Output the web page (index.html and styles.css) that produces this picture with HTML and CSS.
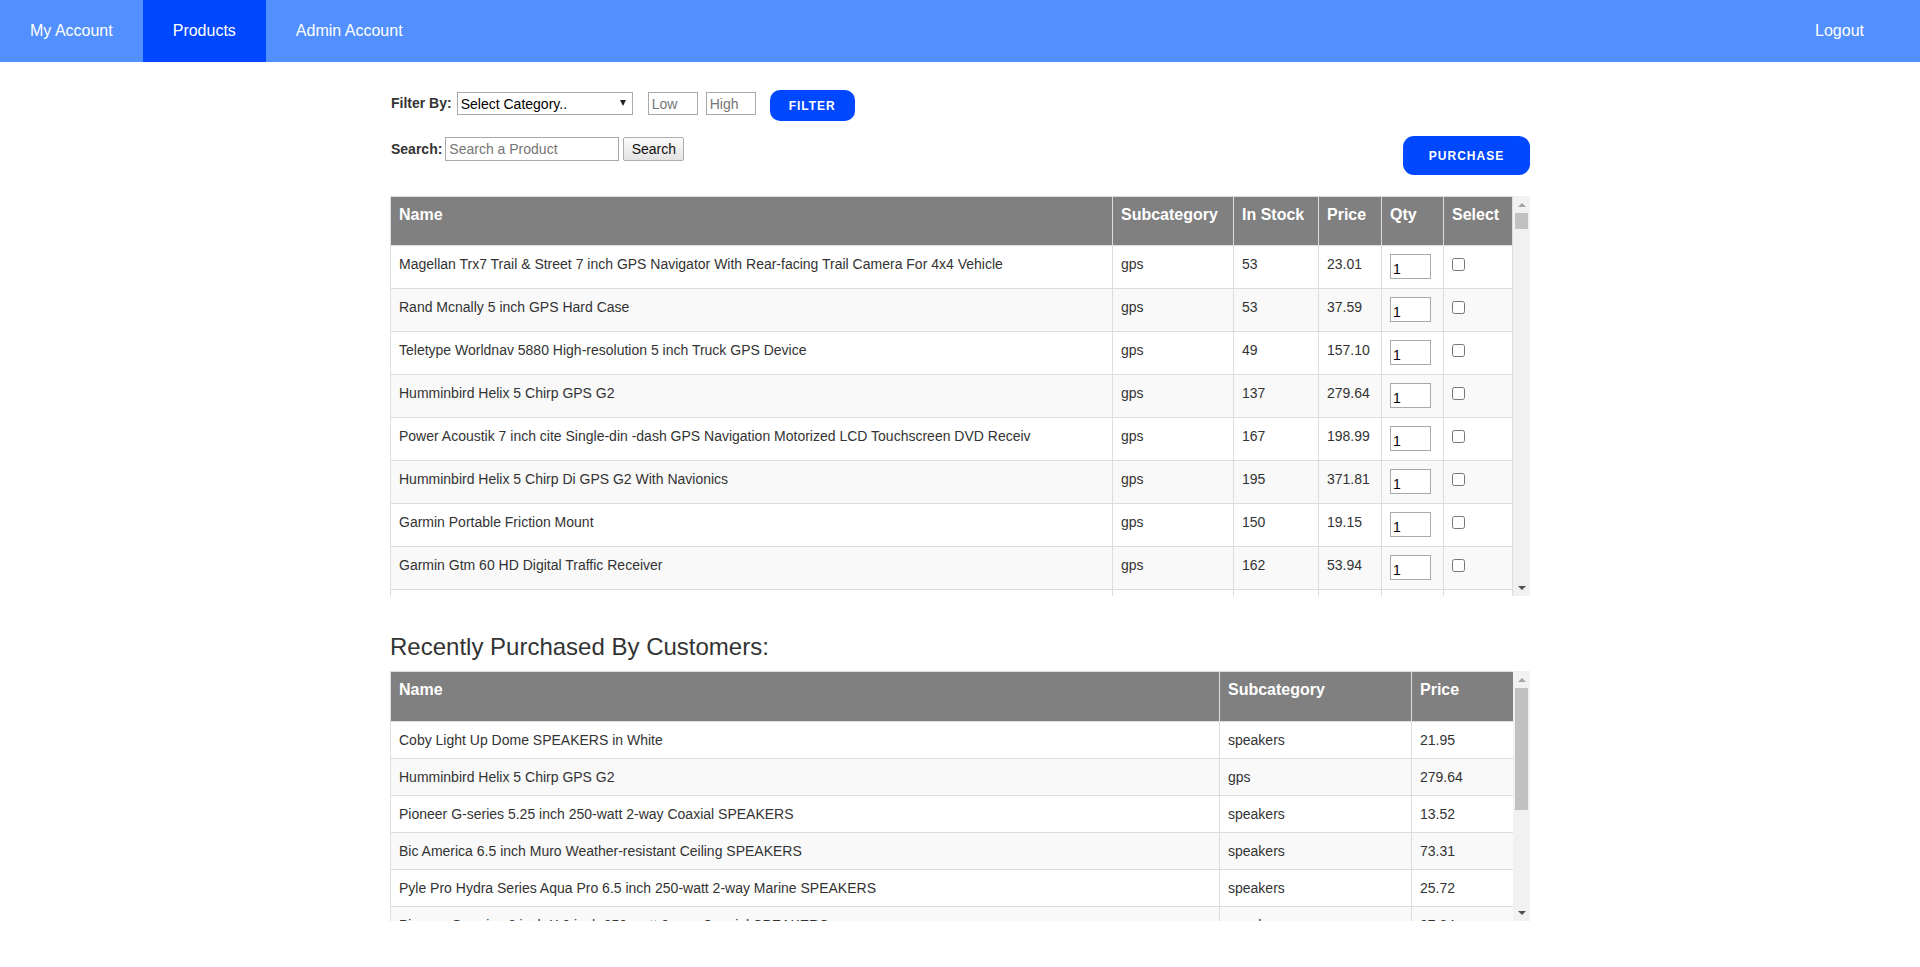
FILE: index.html
```html
<!DOCTYPE html>
<html lang="en">
<head>
<meta charset="utf-8">
<title>Products</title>
<link rel="stylesheet" href="styles.css">
</head>
<body>
<nav class="topnav">
  <a class="nav-link" href="#">My Account</a>
  <a class="nav-link active" href="#">Products</a>
  <a class="nav-link" href="#">Admin Account</a>
  <a class="nav-link logout" href="#">Logout</a>
</nav>

<main class="container">
  <div class="filter-row">
    <label class="lbl">Filter By:</label>
    <span class="select-wrap"><select class="sel"><option>Select Category..</option></select></span>
    <input class="price-in low" type="text" placeholder="Low">
    <input class="price-in high" type="text" placeholder="High">
    <button class="btn-blue filter">FILTER</button>
  </div>

  <div class="search-row">
    <div class="search-group">
      <label class="lbl">Search:</label>
      <input class="search-in" type="text" placeholder="Search a Product">
      <button class="btn-search">Search</button>
    </div>
    <button class="btn-blue purchase">PURCHASE</button>
  </div>

  <div class="scroll-box products-box">
    <div class="table-view">
      <table class="grid products">
        <colgroup>
          <col class="c-name"><col class="c-sub"><col class="c-stock"><col class="c-price"><col class="c-qty"><col class="c-sel">
        </colgroup>
        <thead>
          <tr><th>Name</th><th>Subcategory</th><th>In Stock</th><th>Price</th><th>Qty</th><th>Select</th></tr>
        </thead>
        <tbody>
          <tr><td>Magellan Trx7 Trail &amp; Street 7 inch GPS Navigator With Rear-facing Trail Camera For 4x4 Vehicle</td><td>gps</td><td>53</td><td>23.01</td><td><input class="qty" type="text" value="1"></td><td><input class="chk" type="checkbox"></td></tr>
          <tr><td>Rand Mcnally 5 inch GPS Hard Case</td><td>gps</td><td>53</td><td>37.59</td><td><input class="qty" type="text" value="1"></td><td><input class="chk" type="checkbox"></td></tr>
          <tr><td>Teletype Worldnav 5880 High-resolution 5 inch Truck GPS Device</td><td>gps</td><td>49</td><td>157.10</td><td><input class="qty" type="text" value="1"></td><td><input class="chk" type="checkbox"></td></tr>
          <tr><td>Humminbird Helix 5 Chirp GPS G2</td><td>gps</td><td>137</td><td>279.64</td><td><input class="qty" type="text" value="1"></td><td><input class="chk" type="checkbox"></td></tr>
          <tr><td>Power Acoustik 7 inch cite Single-din -dash GPS Navigation Motorized LCD Touchscreen DVD Receiv</td><td>gps</td><td>167</td><td>198.99</td><td><input class="qty" type="text" value="1"></td><td><input class="chk" type="checkbox"></td></tr>
          <tr><td>Humminbird Helix 5 Chirp Di GPS G2 With Navionics</td><td>gps</td><td>195</td><td>371.81</td><td><input class="qty" type="text" value="1"></td><td><input class="chk" type="checkbox"></td></tr>
          <tr><td>Garmin Portable Friction Mount</td><td>gps</td><td>150</td><td>19.15</td><td><input class="qty" type="text" value="1"></td><td><input class="chk" type="checkbox"></td></tr>
          <tr><td>Garmin Gtm 60 HD Digital Traffic Receiver</td><td>gps</td><td>162</td><td>53.94</td><td><input class="qty" type="text" value="1"></td><td><input class="chk" type="checkbox"></td></tr>
          <tr><td>Garmin Nuvi 2597lmt 5 inch GPS Navigator</td><td>gps</td><td>88</td><td>149.99</td><td><input class="qty" type="text" value="1"></td><td><input class="chk" type="checkbox"></td></tr>
        </tbody>
      </table>
    </div>
    <div class="vscroll">
      <div class="sb-btn"><span class="arrow-up"></span></div>
      <div class="sb-track"><div class="sb-thumb thumb-small"></div></div>
      <div class="sb-btn"><span class="arrow-down"></span></div>
    </div>
  </div>

  <h2 class="recent-title">Recently Purchased By Customers:</h2>

  <div class="scroll-box recent-box">
    <div class="table-view">
      <table class="grid recent">
        <colgroup>
          <col class="r-name"><col class="r-sub"><col class="r-price">
        </colgroup>
        <thead>
          <tr><th>Name</th><th>Subcategory</th><th>Price</th></tr>
        </thead>
        <tbody>
          <tr><td>Coby Light Up Dome SPEAKERS in White</td><td>speakers</td><td>21.95</td></tr>
          <tr><td>Humminbird Helix 5 Chirp GPS G2</td><td>gps</td><td>279.64</td></tr>
          <tr><td>Pioneer G-series 5.25 inch 250-watt 2-way Coaxial SPEAKERS</td><td>speakers</td><td>13.52</td></tr>
          <tr><td>Bic America 6.5 inch Muro Weather-resistant Ceiling SPEAKERS</td><td>speakers</td><td>73.31</td></tr>
          <tr><td>Pyle Pro Hydra Series Aqua Pro 6.5 inch 250-watt 2-way Marine SPEAKERS</td><td>speakers</td><td>25.72</td></tr>
          <tr><td>Pioneer G-series 6 inch X 9 inch 250-watt 3-way Coaxial SPEAKERS</td><td>speakers</td><td>37.84</td></tr>
        </tbody>
      </table>
    </div>
    <div class="vscroll">
      <div class="sb-btn"><span class="arrow-up"></span></div>
      <div class="sb-track"><div class="sb-thumb thumb-large"></div></div>
      <div class="sb-btn"><span class="arrow-down"></span></div>
    </div>
  </div>
</main>
</body>
</html>
```

FILE: styles.css
```css
* { box-sizing: border-box; }

body {
  margin: 0;
  font-family: "Liberation Sans", Arial, sans-serif;
  color: #333;
  background: #fff;
}

/* ---------- top navigation ---------- */
.topnav {
  display: flex;
  height: 62px;
  background: #528fff;
  padding-right: 26px;
}
.nav-link {
  display: block;
  padding: 0 30px;
  line-height: 62px;
  font-size: 16px;
  color: #fff;
  text-decoration: none;
}
.nav-link.active { background: #0048ff; }
.nav-link.logout { margin-left: auto; }

/* ---------- content ---------- */
.container {
  width: 1140px;
  margin: 0 auto;
  padding-top: 28px;
}

.filter-row {
  display: flex;
  align-items: flex-start;
  height: 31px;
}
.lbl {
  font-weight: bold;
  font-size: 14px;
  line-height: 23px;
  margin-top: 2px;
  padding-left: 1px;
  margin-right: 5px;
  color: #333;
}
.select-wrap {
  position: relative;
  margin-top: 2px;
  height: 23px;
}
.sel {
  -webkit-appearance: none;
  appearance: none;
  display: block;
  width: 176px;
  height: 23px;
  border: 1px solid #a9a9a9;
  border-radius: 0;
  background: #fff;
  font: 14px "Liberation Sans", Arial, sans-serif;
  color: #000;
  padding: 0 0 0 3px;
  outline: none;
}
.select-wrap::after {
  content: "";
  position: absolute;
  right: 7px;
  top: 8px;
  border-left: 3.5px solid transparent;
  border-right: 3.5px solid transparent;
  border-top: 6px solid #222;
}
.price-in {
  width: 50px;
  height: 23px;
  margin-top: 2px;
  border: 1px solid #a9a9a9;
  padding: 0 3px;
  font: 14px "Liberation Sans", Arial, sans-serif;
  color: #000;
}
.price-in.low { margin-left: 15px; }
.price-in.high { margin-left: 8px; }
.price-in::placeholder,
.search-in::placeholder { color: #757575; }

.btn-blue {
  border: none;
  background: #0048ff;
  color: #fff;
  font: bold 12px "Liberation Sans", Arial, sans-serif;
  letter-spacing: 1px;
  border-radius: 10px;
  cursor: pointer;
  padding: 0;
}
.btn-blue.filter {
  width: 85px;
  height: 31px;
  margin-left: 14px;
}
.btn-blue.purchase {
  width: 127px;
  height: 39px;
  border-radius: 11px;
}

.search-row {
  display: flex;
  justify-content: space-between;
  align-items: flex-start;
  margin-top: 15px;
}
.search-group {
  display: flex;
  align-items: flex-start;
  margin-top: 1px;
}
.search-group .lbl {
  margin-top: 0;
  line-height: 24px;
  margin-right: 3px;
}
.search-in {
  width: 174px;
  height: 24px;
  border: 1px solid #a9a9a9;
  padding: 0 3px;
  font: 14px "Liberation Sans", Arial, sans-serif;
  color: #000;
}
.btn-search {
  width: 61px;
  height: 24px;
  margin-left: 4px;
  border: 1px solid #adadad;
  border-radius: 2px;
  background: linear-gradient(#fbfbfb, #e3e3e3);
  font: 14px "Liberation Sans", Arial, sans-serif;
  color: #111;
  padding: 0;
}

/* ---------- scrolling tables ---------- */
.scroll-box {
  display: flex;
  width: 1140px;
}
.products-box { height: 400px; margin-top: 21px; }
.recent-box { height: 250px; }

.table-view {
  flex: 1;
  overflow: hidden;
}

.grid {
  width: 100%;
  table-layout: fixed;
  border-collapse: collapse;
  font-size: 14px;
  color: #333;
}
.grid th,
.grid td {
  border: 1px solid #ddd;
  text-align: left;
  vertical-align: top;
  line-height: 20px;
  white-space: nowrap;
  overflow: hidden;
}
.grid th {
  background: #808080;
  color: #fff;
  font-size: 16px;
  font-weight: bold;
  padding: 8px 8px 20px;
}
.grid.recent th { padding-bottom: 21px; }
.grid td { padding: 8px; }
.grid.products td { padding-bottom: 9px; }
.grid tbody tr:nth-child(even) td { background: #f9f9f9; }

.c-name { width: 722px; }
.c-sub { width: 121px; }
.c-stock { width: 85px; }
.c-price { width: 63px; }
.c-qty { width: 62px; }
.c-sel { width: 69px; }

.r-name { width: 829px; }
.r-sub { width: 192px; }
.r-price { width: 102px; }

.qty {
  display: block;
  width: 41px;
  height: 25px;
  border: 1px solid #a9a9a9;
  padding: 4px 2px 0;
  font: 14px "Liberation Sans", Arial, sans-serif;
  color: #000;
}
.chk {
  display: block;
  width: 13px;
  height: 13px;
  margin: 4px 0 0 0;
}

/* ---------- scrollbar ---------- */
.vscroll {
  width: 17px;
  display: flex;
  flex-direction: column;
  background: #f1f1f1;
}
.sb-btn {
  height: 17px;
  display: flex;
  align-items: center;
  justify-content: center;
}
.arrow-up {
  border-left: 4px solid transparent;
  border-right: 4px solid transparent;
  border-bottom: 4px solid #a3a3a3;
}
.arrow-down {
  border-left: 4px solid transparent;
  border-right: 4px solid transparent;
  border-top: 4px solid #505050;
}
.sb-track {
  flex: 1;
  padding: 0 2px;
}
.sb-thumb {
  background: #c1c1c1;
}
.thumb-small { height: 16px; }
.thumb-large { height: 122px; }

.recent-title {
  font-size: 24px;
  font-weight: normal;
  line-height: 26px;
  margin: 38px 0 11px;
  color: #333;
}
```
